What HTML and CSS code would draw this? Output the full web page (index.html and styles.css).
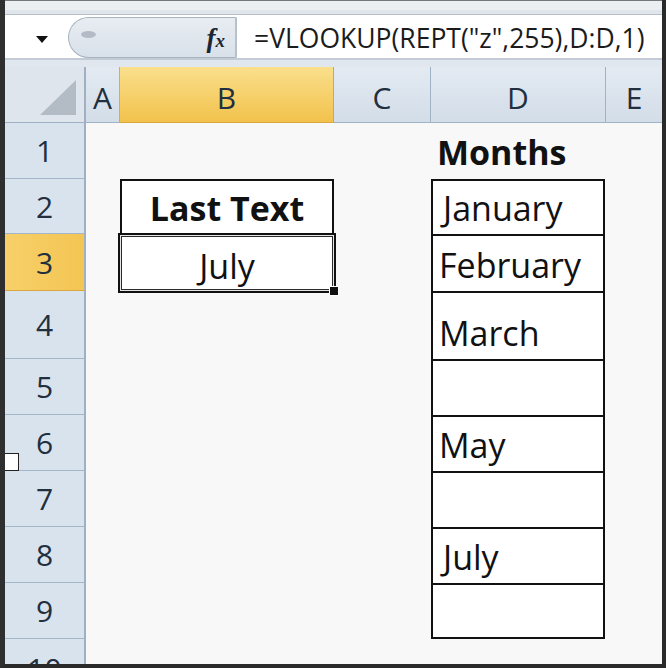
FILE: index.html
```html
<!DOCTYPE html>
<html lang="en">
<head>
    <meta charset="UTF-8">
    <title>Last Text - VLOOKUP</title>
    <link rel="stylesheet" href="styles.css">
</head>
<body>
<div class="window">
    <div class="top-strip"></div>

    <!-- barra de formulas -->
    <div class="formula-bar">
        <div class="name-box">
            <svg width="12" height="7" viewBox="0 0 12 7"><polygon points="0,0 12,0 6,7" fill="#111"/></svg>
        </div>
        <div class="fx-pill">
            <span class="knob"></span>
            <span class="fx"><i>f</i><i class="x">x</i></span>
        </div>
        <div class="formula">=VLOOKUP(REPT("z",255),D:D,1)</div>
    </div>
    <div class="bar-gap"></div>

    <!-- hoja -->
    <div class="sheet">
        <div class="corner">
            <svg width="81" height="56"><polygon points="35,48 71,48 71,13" fill="#b3bcc5"/></svg>
        </div>
        <div class="col-head">A</div>
        <div class="col-head selected">B</div>
        <div class="col-head">C</div>
        <div class="col-head">D</div>
        <div class="col-head last">E</div>

        <div class="row-head r1">1</div>
        <div class="row-head r2">2</div>
        <div class="row-head r3 selected">3</div>
        <div class="row-head r4">4</div>
        <div class="row-head r5">5</div>
        <div class="row-head r6">6</div>
        <div class="row-head r7">7</div>
        <div class="row-head r8">8</div>
        <div class="row-head r9">9</div>
        <div class="row-head r10">10</div>

        <div class="cell title">Last Text</div>
        <div class="cell active">July<span class="fill-handle"></span></div>

        <div class="months">Months</div>
        <div class="month r2 first-j">January</div>
        <div class="month r3">February</div>
        <div class="month r4">March</div>
        <div class="month r5"></div>
        <div class="month r6">May</div>
        <div class="month r7"></div>
        <div class="month r8 first-j">July</div>
        <div class="month r9 end"></div>
    </div>

    <div class="side-handle"></div>
</div>
</body>
</html>
```

FILE: styles.css
```css
body {
    margin: 0;
    font-family: "Open Sans", sans-serif;
    background: #fff;
}
.window {
    position: relative;
    width: 666px;
    height: 668px;
    box-sizing: border-box;
    border-left: 5px solid #2f2f2f;
    border-right: 4px solid #2a2a2a;
    border-bottom: 4px solid #2a2a2a;
    overflow: hidden;
    background: #f8f8f8;
}
.top-strip {
    height: 15px;
    background: #eceff2;
    border-top: 1px solid #777;
    border-bottom: 1px solid #b5bfc9;
    box-sizing: border-box;
    box-shadow: inset 0 -4px 0 #dfe5eb;
}

/* barra de formulas */
.formula-bar {
    display: flex;
    height: 43px;
    background: #fff;
    border-bottom: 2px solid #c3ccd6;
}
.name-box {
    width: 63px;
    display: flex;
    align-items: center;
    justify-content: center;
    padding: 6px 0 0 10px;
    box-sizing: border-box;
}
.fx-pill {
    position: relative;
    width: 169px;
    margin-top: 2px;
    border: 1px solid #a7b3bf;
    border-right: 2px solid #b6c1cc;
    border-radius: 21px 0 0 21px;
    background: linear-gradient(#e8edf2, #d8e0e9);
    display: flex;
    align-items: center;
    justify-content: flex-end;
    box-sizing: border-box;
    padding-right: 10px;
}
.knob {
    position: absolute;
    left: 12px;
    top: 13px;
    width: 15px;
    height: 7px;
    border-radius: 50%;
    background: #b3bcc6;
}
.fx {
    font-family: "Liberation Serif", serif;
    font-weight: bold;
    font-size: 27px;
    color: #1c2633;
    margin-top: 2px;
}
.fx .x {
    font-size: 19px;
}
.formula {
    flex: 1;
    padding: 3px 0 0 17px;
    display: flex;
    align-items: center;
    font-size: 26.5px;
    color: #1b1b1b;
    white-space: nowrap;
}
.bar-gap {
    height: 7px;
    background: #e1e7ee;
}

/* hoja */
.sheet {
    display: grid;
    grid-template-columns: 81px 34px 214px 97px 175px 1fr;
    grid-template-rows: 56px 56px 55px 57px 68px 56px 56px 56px 56px 56px 56px;
}
.corner {
    grid-row: 1;
    grid-column: 1;
    background: #dfe5ec;
    border-right: 2px solid #9fb0c2;
    border-bottom: 1px solid #9fb0c2;
    box-sizing: border-box;
}
.col-head, .row-head {
    display: flex;
    align-items: center;
    justify-content: center;
    font-size: 30px;
    color: #222f3e;
    box-sizing: border-box;
}
.col-head {
    grid-row: 1;
    background: linear-gradient(#e3eaf2, #d3dde8);
    border-right: 1px solid #9fb2c6;
    border-bottom: 1px solid #9fb2c6;
    padding-top: 6px;
}
.col-head.last {
    border-right: none;
}
.col-head.selected {
    background: linear-gradient(#fadf8c, #f2c24c);
    border-right-color: #d6a93e;
    border-bottom-color: #d9a640;
}
.row-head {
    grid-column: 1;
    background: #d9e3ee;
    border-right: 2px solid #9fb0c2;
    border-bottom: 1px solid #a4b6ca;
}
.row-head.selected {
    background: linear-gradient(90deg, #f7d06a, #f3c553);
    border-bottom-color: #d9a640;
}
.r1 { grid-row: 2; }
.r2 { grid-row: 3; }
.r3 { grid-row: 4; }
.r4 { grid-row: 5; }
.r5 { grid-row: 6; }
.r6 { grid-row: 7; }
.r7 { grid-row: 8; }
.r8 { grid-row: 9; }
.r9 { grid-row: 10; }
.r10 { grid-row: 11; align-items: flex-start; padding-top: 9px; }

.cell, .month, .months {
    display: flex;
    align-items: flex-end;
    font-size: 34px;
    line-height: 34px;
    color: #111;
    box-sizing: border-box;
}
.cell {
    grid-column: 3;
    justify-content: center;
    background: #fff;
}
.cell.title {
    grid-row: 3;
    border: 2px solid #111;
    border-bottom: none;
    font-weight: bold;
    padding-bottom: 9px;
}
.cell.active {
    position: relative;
    grid-row: 4;
    margin: -1px -2px -2px -2px;
    border: 2px solid #111;
    box-shadow: inset 0 0 0 1px #e6e6e6, inset 0 0 0 2px #2a2a2a;
    padding-bottom: 8px;
}
.fill-handle {
    position: absolute;
    right: -5px;
    bottom: -5px;
    width: 8px;
    height: 8px;
    background: #111;
    border: 1px solid #fff;
}
.months {
    grid-row: 2;
    grid-column: 5;
    font-weight: bold;
    padding: 0 0 10px 6px;
}
.month {
    grid-column: 5;
    background: #fff;
    border: 2px solid #111;
    border-bottom: none;
    margin-right: 1px;
    padding: 0 0 9px 6px;
}
.month.first-j {
    padding-left: 10px;
}
.month.end {
    border-bottom: 2px solid #111;
}

.side-handle {
    position: absolute;
    left: -6px;
    top: 453px;
    width: 18px;
    height: 16px;
    background: #fff;
    border: 1px solid #222;
}
```
